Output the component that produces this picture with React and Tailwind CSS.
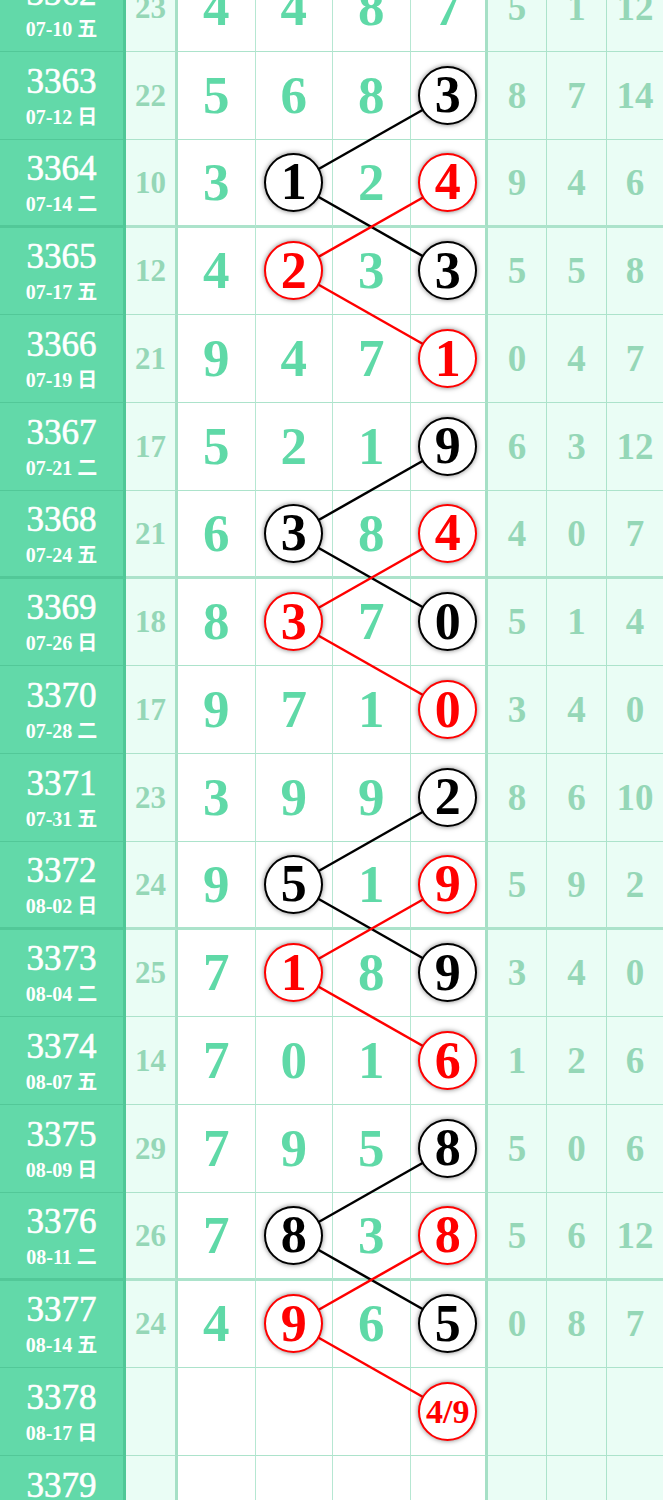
import React from 'react';

const FONT = { fontFamily: '"Liberation Serif", "Noto Sans CJK SC", serif' };

const ROW_H = 87.75;
const X_CENTERS = [216.5, 294, 371.5, 448.5];

const k = (v) => ({ v, c: 'k' });
const r = (v) => ({ v, c: 'r' });

const rows = [
    { id: '3362', date: '07-10 五', sum: '23', mid: ['4', '4', '8', '7'], right: ['5', '1', '12'] },
    { id: '3363', date: '07-12 日', sum: '22', mid: ['5', '6', '8', k('3')], right: ['8', '7', '14'] },
    { id: '3364', date: '07-14 二', sum: '10', mid: ['3', k('1'), '2', r('4')], right: ['9', '4', '6'] },
    { id: '3365', date: '07-17 五', sum: '12', mid: ['4', r('2'), '3', k('3')], right: ['5', '5', '8'] },
    { id: '3366', date: '07-19 日', sum: '21', mid: ['9', '4', '7', r('1')], right: ['0', '4', '7'] },
    { id: '3367', date: '07-21 二', sum: '17', mid: ['5', '2', '1', k('9')], right: ['6', '3', '12'] },
    { id: '3368', date: '07-24 五', sum: '21', mid: ['6', k('3'), '8', r('4')], right: ['4', '0', '7'] },
    { id: '3369', date: '07-26 日', sum: '18', mid: ['8', r('3'), '7', k('0')], right: ['5', '1', '4'] },
    { id: '3370', date: '07-28 二', sum: '17', mid: ['9', '7', '1', r('0')], right: ['3', '4', '0'] },
    { id: '3371', date: '07-31 五', sum: '23', mid: ['3', '9', '9', k('2')], right: ['8', '6', '10'] },
    { id: '3372', date: '08-02 日', sum: '24', mid: ['9', k('5'), '1', r('9')], right: ['5', '9', '2'] },
    { id: '3373', date: '08-04 二', sum: '25', mid: ['7', r('1'), '8', k('9')], right: ['3', '4', '0'] },
    { id: '3374', date: '08-07 五', sum: '14', mid: ['7', '0', '1', r('6')], right: ['1', '2', '6'] },
    { id: '3375', date: '08-09 日', sum: '29', mid: ['7', '9', '5', k('8')], right: ['5', '0', '6'] },
    { id: '3376', date: '08-11 二', sum: '26', mid: ['7', k('8'), '3', r('8')], right: ['5', '6', '12'] },
    { id: '3377', date: '08-14 五', sum: '24', mid: ['4', r('9'), '6', k('5')], right: ['0', '8', '7'] },
    { id: '3378', date: '08-17 日', sum: '', mid: ['', '', '', r('4/9')], right: ['', '', ''] },
    { id: '3379', date: '08-19 二', sum: '', mid: ['', '', '', ''], right: ['', '', ''] },
];

// thick line under every fourth row (3364, 3368, ...)
const isGroupEnd = (id) => Number(id) % 4 === 0;

const Circle = ({ item }) => {
    const red = item.c === 'r';
    const small = item.v.length > 1;
    return (
        <div
            className={`relative z-10 w-[59px] h-[59px] rounded-full bg-white border-[2.5px] flex items-center justify-center shadow-[0_0_5px_rgba(0,0,0,0.5)] ${red ? 'border-[#ff0000] text-[#ff0000]' : 'border-black text-black'}`}
        >
            <span className={`font-bold leading-none ${small ? 'text-[34px]' : 'text-[52px]'}`}>{item.v}</span>
        </div>
    );
};

const Row = ({ row }) => {
    const line = isGroupEnd(row.id) ? 'border-b-[3px]' : 'border-b-[1.5px]';
    return (
        <div className="flex h-[87.75px]">
            {/* issue + date */}
            <div className={`w-[126px] shrink-0 bg-[#62d9a9] border-r-[3px] border-r-[#4fc796] ${line} border-b-[#52c898] flex flex-col items-center justify-center text-white`}>
                <span className="text-[35px] leading-none [-webkit-text-stroke:0.6px_white]">{row.id}</span>
                <span className="text-[20px] font-bold leading-none mt-[8px]">{row.date}</span>
            </div>

            {/* sum */}
            <div className={`w-[52px] shrink-0 bg-[#eafdf5] border-r-[3px] border-r-[#a6e0c6] ${line} border-b-[#ace3cb] flex items-center justify-center`}>
                <span className="text-[31px] font-bold text-[#95d7b7] leading-none">{row.sum}</span>
            </div>

            {/* digits */}
            {row.mid.map((m, i) => (
                <div
                    key={i}
                    className={`w-[77.5px] shrink-0 bg-white ${i === 3 ? 'border-r-[3px] border-r-[#a6e0c6]' : 'border-r-[1.5px] border-r-[#b6e7d2]'} ${line} border-b-[#ace3cb] flex items-center justify-center`}
                >
                    {typeof m === 'object' ? (
                        <Circle item={m} />
                    ) : (
                        <span className="text-[53px] font-bold text-[#5fd9a7] leading-none">{m}</span>
                    )}
                </div>
            ))}

            {/* right columns */}
            {row.right.map((v, i) => (
                <div
                    key={i}
                    className={`${i === 0 ? 'w-[59px]' : i === 1 ? 'w-[60px]' : 'w-[56px]'} shrink-0 bg-[#eafdf5] ${i < 2 ? 'border-r-[1.5px] border-r-[#ace3cb]' : ''} ${line} border-b-[#ace3cb] flex items-center justify-center`}
                >
                    <span className="text-[37px] font-bold text-[#95d7b7] leading-none">{v}</span>
                </div>
            ))}
        </div>
    );
};

const Links = () => {
    const segs = [];
    rows.forEach((row, ri) => {
        const next = rows[ri + 1];
        if (!next) return;
        row.mid.forEach((m, ci) => {
            if (typeof m !== 'object') return;
            next.mid.forEach((n, cj) => {
                if (typeof n === 'object' && n.c === m.c) {
                    segs.push({
                        x1: X_CENTERS[ci],
                        y1: ri * ROW_H + 43.5,
                        x2: X_CENTERS[cj],
                        y2: (ri + 1) * ROW_H + 43.5,
                        c: m.c,
                    });
                }
            });
        });
    });

    return (
        <svg className="absolute inset-0 pointer-events-none" width="663" height={rows.length * ROW_H}>
            {segs.map((s, i) => (
                <line
                    key={i}
                    x1={s.x1}
                    y1={s.y1}
                    x2={s.x2}
                    y2={s.y2}
                    stroke={s.c === 'r' ? '#ff0000' : '#000000'}
                    strokeWidth="2.5"
                />
            ))}
        </svg>
    );
};

export default function App() {
    return (
        <div className="w-[663px] h-[1500px] overflow-hidden bg-white" style={FONT}>
            <div className="relative -mt-[35.75px]">
                {rows.map((row) => (
                    <Row key={row.id} row={row} />
                ))}
                <Links />
            </div>
        </div>
    );
}
